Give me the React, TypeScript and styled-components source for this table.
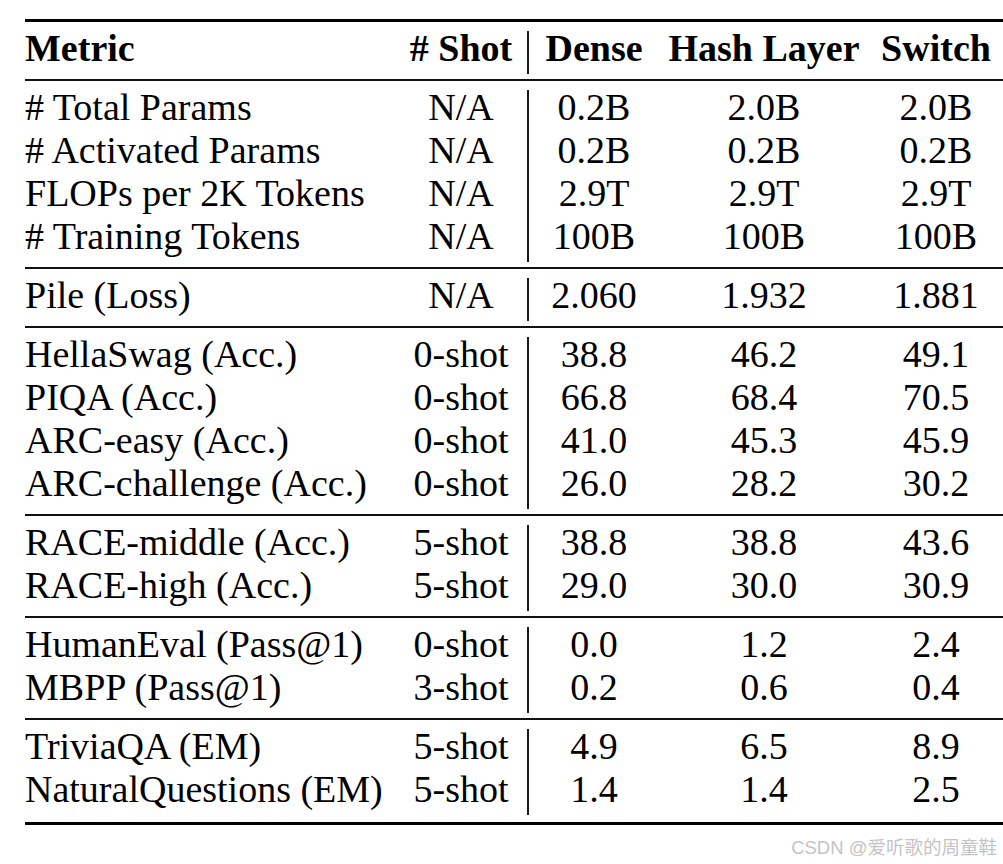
import * as React from "react";
import styled, { createGlobalStyle } from "styled-components";

const ROW_HEIGHT = 43;

const GlobalStyle = createGlobalStyle`
  html, body {
    margin: 0;
    padding: 0;
    background: #ffffff;
  }
  body {
    width: 1003px;
    height: 864px;
    overflow: hidden;
  }
`;

const SPage = styled.div`
  width: 1003px;
  height: 864px;
  display: flex;
  flex-direction: column;
  background: #ffffff;
  color: #000000;
  font-family: "Liberation Serif", "Times New Roman", serif;
`;

const STable = styled.div`
  margin: 19px 0 0 25px;
  width: 978px;
  display: flex;
  flex-direction: column;
  border-top: 3px solid #000000;
  border-bottom: 3px solid #000000;
`;

interface ISectionProps {
  $rows: number;
  $first?: boolean;
  $last?: boolean;
}

const SSection = styled.div<ISectionProps>`
  display: grid;
  grid-template-columns: 370px 132px 2px 130px 210px 134px;
  grid-template-rows: repeat(${({ $rows }) => $rows}, ${ROW_HEIGHT}px);
  padding-top: ${({ $first }) => ($first ? "4.5px" : "5px")};
  padding-bottom: ${({ $last }) => ($last ? "11px" : "9px")};
  border-top: ${({ $first }) => ($first ? "none" : "2px solid #111111")};
`;

const SVLine = styled.div<{ $rows: number }>`
  grid-column: 3;
  grid-row: 1 / span ${({ $rows }) => $rows};
  width: 1.5px;
  margin: 4px 0 -4px;
  background: #1a1a1a;
`;

interface ICellProps {
  $align?: "left" | "center";
  $bold?: boolean;
}

const SCell = styled.div<ICellProps>`
  font-size: 38px;
  line-height: ${ROW_HEIGHT}px;
  white-space: nowrap;
  text-align: ${({ $align }) => $align || "center"};
  font-weight: ${({ $bold }) => ($bold ? 700 : 400)};
`;

const SWatermark = styled.div`
  align-self: flex-end;
  margin: 12px 6px 0 0;
  font-family: "Liberation Sans", "Noto Sans CJK SC", sans-serif;
  font-size: 18.5px;
  line-height: 22px;
  color: #c4c4c4;
`;

const header = ["Metric", "# Shot", "Dense", "Hash Layer", "Switch"];

const sections: string[][][] = [
  [
    ["# Total Params", "N/A", "0.2B", "2.0B", "2.0B"],
    ["# Activated Params", "N/A", "0.2B", "0.2B", "0.2B"],
    ["FLOPs per 2K Tokens", "N/A", "2.9T", "2.9T", "2.9T"],
    ["# Training Tokens", "N/A", "100B", "100B", "100B"]
  ],
  [["Pile (Loss)", "N/A", "2.060", "1.932", "1.881"]],
  [
    ["HellaSwag (Acc.)", "0-shot", "38.8", "46.2", "49.1"],
    ["PIQA (Acc.)", "0-shot", "66.8", "68.4", "70.5"],
    ["ARC-easy (Acc.)", "0-shot", "41.0", "45.3", "45.9"],
    ["ARC-challenge (Acc.)", "0-shot", "26.0", "28.2", "30.2"]
  ],
  [
    ["RACE-middle (Acc.)", "5-shot", "38.8", "38.8", "43.6"],
    ["RACE-high (Acc.)", "5-shot", "29.0", "30.0", "30.9"]
  ],
  [
    ["HumanEval (Pass@1)", "0-shot", "0.0", "1.2", "2.4"],
    ["MBPP (Pass@1)", "3-shot", "0.2", "0.6", "0.4"]
  ],
  [
    ["TriviaQA (EM)", "5-shot", "4.9", "6.5", "8.9"],
    ["NaturalQuestions (EM)", "5-shot", "1.4", "1.4", "2.5"]
  ]
];

const renderRow = (row: string[], key: string, bold?: boolean) =>
  row.map((text, i) => (
    <SCell key={`${key}-${i}`} $align={i === 0 ? "left" : "center"} $bold={bold}>
      {text}
    </SCell>
  ));

const App = () => {
  return (
    <>
      <GlobalStyle />
      <SPage>
        <STable>
          <SSection $rows={1} $first>
            <SVLine $rows={1} />
            {renderRow(header, "head", true)}
          </SSection>
          {sections.map((rows, s) => (
            <SSection
              key={s}
              $rows={rows.length}
              $last={s === sections.length - 1}
            >
              <SVLine $rows={rows.length} />
              {rows.map((row, r) => renderRow(row, `${s}-${r}`))}
            </SSection>
          ))}
        </STable>
        <SWatermark>{"CSDN @爱听歌的周童鞋"}</SWatermark>
      </SPage>
    </>
  );
};

export default App;
